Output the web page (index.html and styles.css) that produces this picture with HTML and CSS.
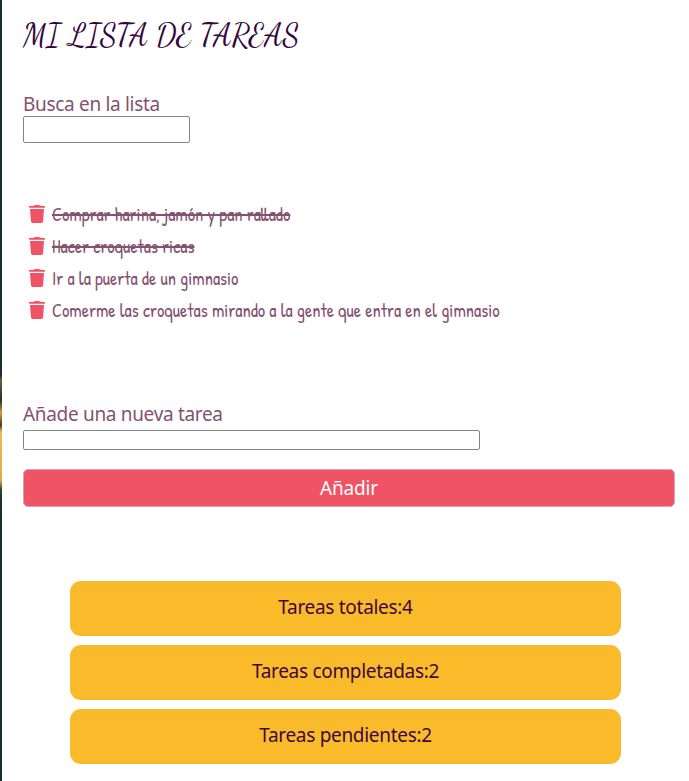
FILE: index.html
```html
<!DOCTYPE html>
<html lang="es">
<head>
<meta charset="utf-8">
<title>Mi lista de tareas</title>
<link rel="stylesheet" href="styles.css">
</head>
<body>
<svg class="sprite" width="0" height="0"><symbol id="trash" viewBox="0 0 16 18"><path d="M5 .7Q5.300 0 6 0h4Q10.700 0 11 .7L15.300 1Q16 1.100 16 1.800v.9H0v-.9Q0 1.100 .7 1zM1 4h14L14 16.600Q13.900 18 12.500 18h-9Q2.100 18 2 16.600z"/></symbol></svg>
<main class="app">
  <h1 class="title">MI LISTA DE TAREAS</h1>
  <section class="search">
    <label for="search">Busca en la lista</label>
    <input id="search" class="search-input" type="text">
  </section>
  <ul class="tasks">
    <li class="done"><svg><use href="#trash"/></svg><span>Comprar harina, jamón y pan rallado</span></li>
    <li class="done"><svg><use href="#trash"/></svg><span>Hacer croquetas ricas</span></li>
    <li><svg><use href="#trash"/></svg><span>Ir a la puerta de un gimnasio</span></li>
    <li><svg><use href="#trash"/></svg><span>Comerme las croquetas mirando a la gente que entra en el gimnasio</span></li>
  </ul>
  <form class="add">
    <label for="task">Añade una nueva tarea</label>
    <input id="task" class="task-input" type="text">
    <button type="button">Añadir</button>
  </form>
  <section class="stats">
    <p>Tareas totales:4</p>
    <p>Tareas completadas:2</p>
    <p>Tareas pendientes:2</p>
  </section>
</main>
</body>
</html>
```
FILE: styles.css
```css
* { box-sizing: border-box; }
body {
  margin: 0;
  height: 781px;
  overflow: hidden;
  background: linear-gradient(#1d2c2f 0 375px, #66603c 380px, #26302c 400px, #d99b3b 413px, #4b3522 425px, #e8bd55 432px, #dcae48 480px, #38402f 490px, #1d2c2f 500px);
  font-family: "Noto Sans", sans-serif;
  font-size: 19px;
  font-weight: 370;
  color: #84526f;
}
.sprite { position: absolute; }
.app {
  height: 781px;
  margin-left: 2px;
  padding: 16px 14px 0 21px;
  background: #fff;
}
.title {
  margin: 0;
  height: 40px;
  font: 400 31px/39px "Dancing Script", "Liberation Serif", serif;
  color: #33063b;
  white-space: nowrap;
}
label { display: block; height: 26px; line-height: 28px; letter-spacing: -.32px; }
input {
  display: block;
  padding: 1px 2px;
  border: 1px solid #858585;
  border-radius: 2px;
  background: #fff;
}
.search { margin-top: 34px; }
.search-input { width: 167px; height: 27px; }
.tasks {
  margin: 55px 0 0;
  padding: 0 0 0 6px;
  list-style: none;
  font-family: "Patrick Hand", "Noto Sans", sans-serif;
  font-size: 18.22px;
}
.tasks li { display: flex; height: 32px; line-height: 33px; white-space: nowrap; }
.tasks svg { flex: none; width: 16px; height: 18px; margin: 7px 7px 0 0; fill: #f05366; }
.done span { text-decoration: line-through 2px; }
.add { margin-top: 74px; }
.task-input { width: 457px; height: 20px; margin-top: 4px; }
button {
  display: block;
  width: 100%;
  height: 38px;
  margin-top: 19px;
  padding: 0;
  border: 1px solid #cba3cf;
  border-radius: 5px;
  background: #f05366;
  color: #fff;
  font: inherit;
  letter-spacing: -.2px;
  line-height: 33px;
}
.stats { display: grid; gap: 9px; margin: 74px 54px 0 47px; }
.stats p {
  margin: 0;
  height: 55px;
  border-radius: 11px;
  background: #fabb2a;
  color: #3b083f;
  line-height: 53px;
  letter-spacing: -.3px;
  text-align: center;
}
```
